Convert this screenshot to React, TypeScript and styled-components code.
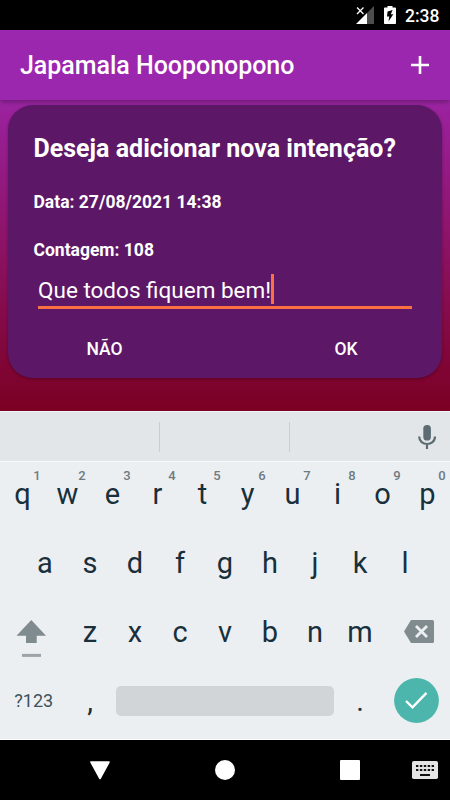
import React from "react";
import styled, { createGlobalStyle } from "styled-components";

const GlobalStyle = createGlobalStyle`
  * { box-sizing: border-box; }
  body { margin: 0; background: #000; font-family: Roboto, sans-serif; }
  button { border: 0; padding: 0; background: none; font: inherit; color: inherit; }
  svg { display: block; flex: none; }
`;

const Screen = styled.div`
  width: 450px;
  height: 800px;
  display: flex;
  flex-direction: column;
  overflow: hidden;
`;

const StatusBar = styled.div`
  height: 30px;
  flex: none;
  background: #000;
  color: #fff;
  display: flex;
  align-items: center;
  justify-content: flex-end;
  gap: 9px;
  padding-right: 10px;
`;

const Clock = styled.span`
  font-size: 17.5px;
  font-weight: 500;
  line-height: 30px;
  width: 35px;
  white-space: nowrap;
  padding-top: 1px;
`;

const AppBar = styled.header`
  height: 70px;
  flex: none;
  z-index: 1;
  background: #9b27ae;
  color: #fff;
  display: flex;
  align-items: center;
  justify-content: space-between;
  padding: 2px 20px 0;
  box-shadow: 0 2px 5px rgba(0, 0, 0, 0.32);
`;

const Title = styled.h1`
  margin: 0;
  font-size: 25px;
  font-weight: 500;
  line-height: 30px;
  letter-spacing: -0.03px;
`;

const AddButton = styled.button`
  display: flex;
`;

const Content = styled.main`
  height: 311px;
  flex: none;
  padding: 5px 8px 0;
  background: linear-gradient(#9c27a6 0%, #9a219b 4%, #7b0023 100%);
`;

const Card = styled.section`
  height: 272.5px;
  border-radius: 25px;
  background: #5c1867;
  color: #fff;
  box-shadow: 0 1px 3px rgba(0, 0, 0, 0.3);
  padding: 29px 30px 0 25.5px;
  display: flex;
  flex-direction: column;
`;

const Question = styled.h2`
  margin: 0 0 26px;
  font-size: 25px;
  font-weight: 700;
  line-height: 30px;
  white-space: nowrap;
`;

const Detail = styled.p`
  margin: 0 0 23px;
  font-size: 17.5px;
  font-weight: 700;
  line-height: 25px;
`;

const Field = styled.div`
  margin: -13px 0 0 4.5px;
  height: 36px;
  display: flex;
  align-items: flex-start;
  border-bottom: 3px solid #fb7040;
  font-size: 22.5px;
  line-height: 34px;
  white-space: nowrap;
`;

const Caret = styled.span`
  width: 3px;
  height: 30px;
  margin-top: 1px;
  background: #fb7040;
`;

const Actions = styled.div`
  display: flex;
  justify-content: space-between;
  margin: 27px 44px 0 49px;
`;

const Action = styled.button`
  width: 44px;
  font-size: 17.5px;
  font-weight: 500;
  line-height: 26px;
`;

const Keyboard = styled.section`
  height: 329px;
  flex: none;
  background: #eceff2;
  color: #18303b;
  display: flex;
  flex-direction: column;
  border-bottom: 1px solid #fff;
`;

const Suggestions = styled.div`
  height: 51px;
  flex: none;
  display: flex;
  align-items: center;
  background: #e3e6e9;
  border-top: 1px solid #f3f5f6;
  border-bottom: 1px solid #f7f9fa;
`;

const Slot = styled.div<{ $width: number; $divided?: boolean }>`
  width: ${(p) => p.$width}px;
  height: 30px;
  border-right: ${(p) => (p.$divided ? "1px solid #c9cdd0" : "0")};
  display: flex;
  align-items: center;
  justify-content: center;
`;

const Keys = styled.div`
  margin-top: -3px;
`;

const KeyRow = styled.div<{ $inset?: number }>`
  height: 69px;
  display: flex;
  align-items: center;
  padding: 0 ${(p) => p.$inset ?? 0}px;
`;

const LetterKey = styled.button`
  position: relative;
  width: 45px;
  height: 69px;
  display: flex;
  align-items: center;
  justify-content: center;
  padding-top: 2px;
  font-size: 29px;
  line-height: 35px;
`;

const ActionKey = styled.button<{ $offset?: number }>`
  width: 67.5px;
  height: 69px;
  display: flex;
  align-items: center;
  justify-content: center;
  padding-left: ${(p) => p.$offset ?? 0}px;
  font-size: 18px;
  line-height: 35px;
  color: #3c525b;
`;

const Hint = styled.sup`
  position: absolute;
  top: 9px;
  right: 3px;
  width: 10px;
  text-align: center;
  font-size: 13px;
  font-weight: 500;
  line-height: 16px;
  color: #6d7b81;
`;

const SpaceBar = styled.button`
  width: 218px;
  height: 30px;
  border-radius: 5px;
  background: #d1d5d8;
  margin: 0 3.5px;
`;

const NavBar = styled.nav`
  height: 60px;
  flex: none;
  background: #000;
  display: grid;
  grid-template-columns: 50px 100px 150px 100px 50px;
  align-items: center;
`;

const NavItem = styled.button`
  display: flex;
  justify-content: center;
`;

const topRow = "qwertyuiop".split("");
const homeRow = "asdfghjkl".split("");
const bottomRow = "zxcvbnm".split("");

export default function App() {
  return (
    <Screen>
      <GlobalStyle />
      <StatusBar>
        <svg width="20" height="20" viewBox="0 0 20 20">
          <path d="M19 1V19H12V8z" fill="#4d4d4d" />
          <path d="M12 8V19H1z" fill="#fff" />
          <path d="M2 2.5L8.5 9M8.5 2.5L2 9" stroke="#fff" strokeWidth="1.3" />
        </svg>
        <svg width="12" height="20" viewBox="0 0 12 20">
          <path d="M3.5 1H8.5V2.5H11.2Q12 2.5 12 3.3V18.2Q12 19 11.2 19H.8Q0 19 0 18.2V3.3Q0 2.5.8 2.5H3.5z" fill="#fff" />
          <path d="M8.6 5L3.6 6.5L3 11.5H5.3L4.5 16.5L9.3 9.2H6.8z" fill="#000" />
        </svg>
        <Clock>2:38</Clock>
      </StatusBar>
      <AppBar>
        <Title>Japamala Hooponopono</Title>
        <AddButton aria-label="Adicionar">
          <svg width="20" height="20" viewBox="0 0 20 20">
            <path d="M10 0V18M1 9H19" stroke="#fff" strokeWidth="2.6" />
          </svg>
        </AddButton>
      </AppBar>
      <Content>
        <Card>
          <Question>Deseja adicionar nova intenção?</Question>
          <Detail>Data: 27/08/2021 14:38</Detail>
          <Detail>Contagem: 108</Detail>
          <Field>
            <span>Que todos fiquem bem!</span>
            <Caret />
          </Field>
          <Actions>
            <Action>NÃO</Action>
            <Action>OK</Action>
          </Actions>
        </Card>
      </Content>
      <Keyboard>
        <Suggestions>
          <Slot $width={160} $divided />
          <Slot $width={130} $divided />
          <Slot $width={114} />
          <Slot $width={46}>
            <svg width="18" height="24" viewBox="0 0 18 24">
              <rect x="5.3" y="0" width="7.6" height="15.5" rx="3.6" fill="#5d6c73" />
              <path d="M1.2 11.5C1.2 21.5 17 21.5 17 11.5M9 19V24" fill="none" stroke="#5d6c73" strokeWidth="2.2" />
            </svg>
          </Slot>
        </Suggestions>
        <Keys>
          <KeyRow>
            {topRow.map((letter, i) => (
              <LetterKey key={letter}>
                {letter}
                <Hint>{(i + 1) % 10}</Hint>
              </LetterKey>
            ))}
          </KeyRow>
          <KeyRow $inset={22.5}>
            {homeRow.map((letter) => (
              <LetterKey key={letter}>{letter}</LetterKey>
            ))}
          </KeyRow>
          <KeyRow>
            <ActionKey aria-label="Shift">
              <svg width="67" height="69" viewBox="0 0 67 69">
                <path d="M31.3 23L46 38.7H36.7V46H26V38.7H16.5z" fill="#808b8f" />
                <path d="M22 58.4H41" stroke="#9ba4a8" strokeWidth="3" />
              </svg>
            </ActionKey>
            {bottomRow.map((letter) => (
              <LetterKey key={letter}>{letter}</LetterKey>
            ))}
            <ActionKey $offset={5} aria-label="Apagar">
              <svg width="30" height="23" viewBox="0 0 30 23">
                <path d="M7 0H28.5Q30 0 30 1.5V21.5Q30 23 28.5 23H7L0 11.5z" fill="#808b8f" />
                <path d="M12 6L23 17M23 6L12 17" stroke="#eceff2" strokeWidth="2.8" />
              </svg>
            </ActionKey>
          </KeyRow>
          <KeyRow>
            <ActionKey>?123</ActionKey>
            <LetterKey>,</LetterKey>
            <SpaceBar aria-label="Espaço" />
            <LetterKey>.</LetterKey>
            <ActionKey aria-label="Concluir">
              <svg width="45" height="45" viewBox="0 0 45 45">
                <circle cx="22.5" cy="22.5" r="22.4" fill="#4db6ac" />
                <path d="M12 23L18.5 29.3L32.5 14.8" fill="none" stroke="#fff" strokeWidth="2.4" />
              </svg>
            </ActionKey>
          </KeyRow>
        </Keys>
      </Keyboard>
      <NavBar>
        <span />
        <NavItem aria-label="Voltar">
          <svg width="20" height="19" viewBox="0 0 20 19">
            <path d="M1 1H19L10 17.5z" fill="#fff" stroke="#fff" strokeWidth="1.6" strokeLinejoin="round" />
          </svg>
        </NavItem>
        <NavItem aria-label="Início">
          <svg width="20" height="20" viewBox="0 0 20 20">
            <circle cx="10" cy="10" r="10" fill="#fff" />
          </svg>
        </NavItem>
        <NavItem aria-label="Recentes">
          <svg width="20" height="20" viewBox="0 0 20 20">
            <rect width="20" height="20" rx="1" fill="#fff" />
          </svg>
        </NavItem>
        <NavItem aria-label="Teclado">
          <svg width="26" height="18" viewBox="0 0 26 18">
            <rect width="26" height="18" rx="1.8" fill="#e4e4e4" />
            <path d="M4 5H22M4 9H22" stroke="#111" strokeWidth="2.2" strokeDasharray="2.4 1.5" />
            <path d="M8 14H18" stroke="#111" strokeWidth="2" />
          </svg>
        </NavItem>
      </NavBar>
    </Screen>
  );
}
